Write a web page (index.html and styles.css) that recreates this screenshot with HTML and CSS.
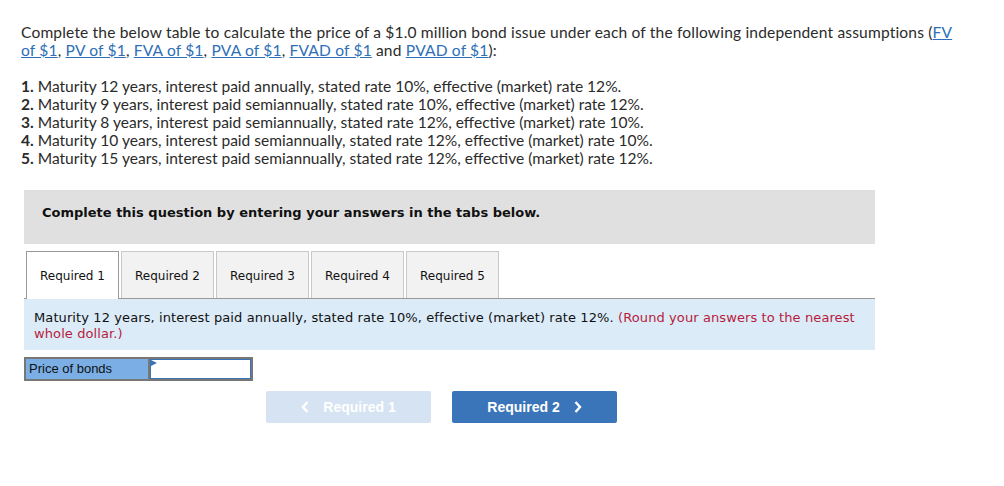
FILE: index.html
```html
<!DOCTYPE html>
<html lang="en">
<head>
    <meta charset="UTF-8">
    <title>Bond price question</title>
    <link rel="stylesheet" href="styles.css">
</head>
<body>
    <div class="page">
        <!-- Question text -->
        <p class="intro">Complete the below table to calculate the price of a $1.0 million bond issue under each of the following independent assumptions (<a href="#">FV</a><br><a href="#">of $1</a>, <a href="#">PV of $1</a>, <a href="#">FVA of $1</a>, <a href="#">PVA of $1</a>, <a href="#">FVAD of $1</a> and <a href="#">PVAD of $1</a>):</p>

        <ol class="cases">
            <li><b>1.</b> Maturity 12 years, interest paid annually, stated rate 10%, effective (market) rate 12%.</li>
            <li><b>2.</b> Maturity 9 years, interest paid semiannually, stated rate 10%, effective (market) rate 12%.</li>
            <li><b>3.</b> Maturity 8 years, interest paid semiannually, stated rate 12%, effective (market) rate 10%.</li>
            <li><b>4.</b> Maturity 10 years, interest paid semiannually, stated rate 12%, effective (market) rate 10%.</li>
            <li><b>5.</b> Maturity 15 years, interest paid semiannually, stated rate 12%, effective (market) rate 12%.</li>
        </ol>

        <!-- Answer area -->
        <div class="banner">Complete this question by entering your answers in the tabs below.</div>

        <ul class="tabs">
            <li class="tab active">Required 1</li>
            <li class="tab">Required 2</li>
            <li class="tab">Required 3</li>
            <li class="tab">Required 4</li>
            <li class="tab">Required 5</li>
        </ul>

        <div class="prompt">
            Maturity 12 years, interest paid annually, stated rate 10%, effective (market) rate 12%. <span class="hint">(Round your answers to the nearest</span><br><span class="hint">whole dollar.)</span>
        </div>

        <div class="answer-row">
            <div class="answer-label">Price of bonds</div>
            <div class="answer-cell"><span class="flag"></span></div>
        </div>

        <div class="nav">
            <button class="nav-btn prev">
                <svg class="chev" width="8" height="12" viewBox="0 0 8 12"><path d="M6.5 1 L2 6 L6.5 11" fill="none" stroke="#fff" stroke-width="2.4"/></svg>
                Required 1
            </button>
            <button class="nav-btn next">
                Required 2
                <svg class="chev" width="8" height="12" viewBox="0 0 8 12"><path d="M1.5 1 L6 6 L1.5 11" fill="none" stroke="#fff" stroke-width="2.4"/></svg>
            </button>
        </div>
    </div>
</body>
</html>
```

FILE: styles.css
```css
* {
    margin: 0;
    padding: 0;
    box-sizing: border-box;
}

body {
    background: #ffffff;
    color: #222;
}

.page {
    padding: 23px 0 0 21px;
    width: 980px;
}

/* Question text */
.intro {
    font-family: Lato, "Open Sans", sans-serif;
    font-size: 15.55px;
    line-height: 18px;
    letter-spacing: 0.17px;
    color: #2b2b2b;
    width: 948px;
}

.intro a {
    color: #2e6fb7;
    text-decoration: underline;
}

.cases {
    list-style: none;
    margin-top: 18px;
    font-family: Lato, "Open Sans", sans-serif;
    font-size: 15.55px;
    line-height: 18px;
    color: #2b2b2b;
}

.cases b {
    font-weight: 700;
}

/* Banner */
.banner {
    margin: 23px 0 0 3px;
    width: 851px;
    height: 54px;
    background: #e0e0e0;
    padding: 15px 0 0 18px;
    font-family: Verdana, "DejaVu Sans", sans-serif;
    font-size: 13px;
    line-height: 16px;
    font-weight: bold;
    color: #111;
}

/* Tabs */
.tabs {
    list-style: none;
    display: flex;
    gap: 2px;
    margin: 7px 0 0 5px;
    position: relative;
    z-index: 1;
}

.tab {
    width: 93px;
    height: 47px;
    display: flex;
    align-items: center;
    justify-content: center;
    background: #f2f2f2;
    border: 1px solid #c8c8c8;
    border-bottom: none;
    font-family: Verdana, "DejaVu Sans", sans-serif;
    font-size: 12px;
    color: #111;
    padding-top: 1px;
}

.tab.active {
    background: #fff;
    border-color: #999;
    height: 48px;
    margin-bottom: -1px;
}

.prompt {
    margin-left: 3px;
    width: 851px;
    height: 52px;
    background: #dbebf8;
    border-top: 1px solid #999;
    padding: 11px 10px 0 10px;
    font-family: Verdana, "DejaVu Sans", sans-serif;
    font-size: 13px;
    line-height: 16px;
    letter-spacing: 0.1px;
    color: #111;
}

.hint {
    color: #b81c3c;
}

/* Answer row */
.answer-row {
    display: flex;
    margin: 7px 0 0 3px;
    width: 229px;
    height: 24px;
    border: 2px solid #777;
}

.answer-label {
    width: 124px;
    background: #7aaee5;
    font-family: Arial, "Liberation Sans", sans-serif;
    font-size: 13px;
    line-height: 20px;
    padding-left: 3px;
    color: #111;
    border-right: 2px solid #777;
}

.answer-cell {
    flex: 1;
    position: relative;
    background: #fff;
    border: 1px solid #3a74b8;
}

.flag {
    position: absolute;
    top: 0;
    left: 0;
    width: 0;
    height: 0;
    border-top: 3px solid transparent;
    border-bottom: 3px solid transparent;
    border-left: 6px solid #3a74b8;
}

/* Navigation */
.nav {
    display: flex;
    gap: 21px;
    margin: 10px 0 0 245px;
}

.nav-btn {
    width: 165px;
    height: 32px;
    border: none;
    border-radius: 2px;
    font-family: Arial, "Liberation Sans", sans-serif;
    font-size: 14px;
    font-weight: bold;
    color: #fff;
    display: flex;
    align-items: center;
    justify-content: center;
    gap: 14px;
}

.prev {
    background: #d6e3f2;
}

.next {
    background: #3a75b9;
}
```
